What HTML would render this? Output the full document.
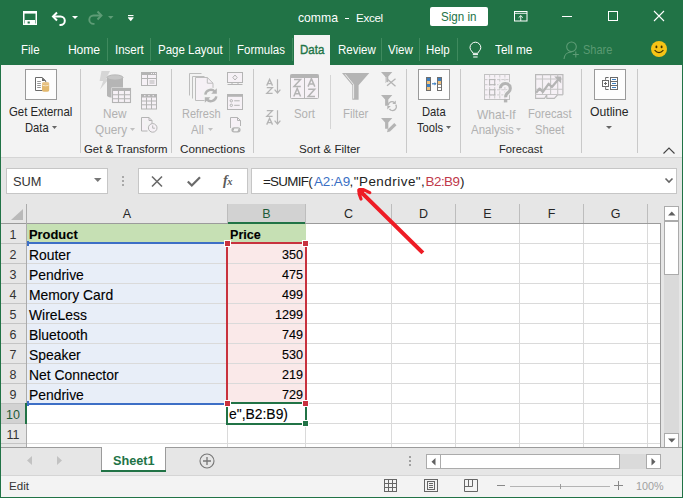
<!DOCTYPE html>
<html><head><meta charset="utf-8">
<style>
*{margin:0;padding:0;box-sizing:border-box}
html,body{width:683px;height:498px;overflow:hidden;background:#217346}
body{position:relative;font-family:"Liberation Sans",sans-serif}
.a{position:absolute}
.t{position:absolute;white-space:nowrap;line-height:1}
.sy{transform:scaleY(1.12);transform-origin:0 0}
svg{position:absolute;overflow:visible}
.ui{font-size:11.5px;color:#fff}
.rb{font-size:11.5px;color:#262626}
.dis{color:#b1b1b1}
.vs{position:absolute;width:1px;background:#c9c9c9}
.cell{font-size:13.9px;color:#000;-webkit-text-stroke:0.12px #000}
.hd{font-size:12.5px;color:#333}
.rn{font-size:12.5px;color:#333;width:26px;text-align:center;left:0}
</style></head><body>

<!-- ============ TITLE BAR ============ -->
<div class="a" style="left:0;top:0;width:683px;height:64px;background:#217346"></div>
<!-- save -->
<svg style="left:22px;top:10px" width="16" height="16" viewBox="0 0 16 16">
 <rect x="1.75" y="1.75" width="12.5" height="12.5" fill="none" stroke="#fff" stroke-width="1.5"/>
 <rect x="1" y="1" width="14" height="2.6" fill="#fff"/>
 <path d="M3 10h10v4.5H3z M5.6 11.6v2.4h2.2v-2.4z" fill="#fff" fill-rule="evenodd"/>
</svg>
<!-- undo -->
<svg style="left:51px;top:11px" width="16" height="14" viewBox="0 0 16 14">
 <path d="M6 1.5L2 5.5l4 4" fill="none" stroke="#fff" stroke-width="2"/>
 <path d="M2.5 5.5h7a4.3 4.3 0 0 1 0 8.6h-1" fill="none" stroke="#fff" stroke-width="2"/>
</svg>
<svg style="left:72px;top:16px" width="6" height="4" viewBox="0 0 6 4"><path d="M0 0h6l-3 3z" fill="#fff"/></svg>
<!-- redo -->
<svg style="left:87px;top:10px" width="16" height="15" viewBox="0 0 16 15">
 <path d="M10.5 1.5l4 4-4 4" fill="none" stroke="#5e9c76" stroke-width="1.9"/>
 <path d="M14 5.5H6.5a4.2 4.2 0 0 0 0 8.4h1" fill="none" stroke="#5e9c76" stroke-width="1.9"/>
</svg>
<svg style="left:108px;top:16px" width="6" height="4" viewBox="0 0 6 4"><path d="M0 0h5.5l-2.75 3z" fill="#5e9c76"/></svg>
<!-- qat customize -->
<svg style="left:128px;top:15px" width="6" height="7" viewBox="0 0 6 7">
 <rect x="0" y="0" width="5.5" height="1.1" fill="#fff"/>
 <path d="M0 2.2h5.5v0.9L2.75 6.2 0 3.1z" fill="#fff"/>
</svg>
<div class="t ui" style="left:298px;top:12px;font-size:12.2px">comma</div>
<div class="a" style="left:345px;top:18px;width:4px;height:1px;background:#fff"></div>
<div class="t ui" style="left:356px;top:12px;font-size:11.6px;letter-spacing:-0.3px">Excel</div>
<!-- sign in -->
<div class="a" style="left:430px;top:7px;width:58px;height:19px;background:#fff;border-radius:2px"></div>
<div class="t sy" style="left:441px;top:10px;font-size:11.6px;color:#217346">Sign in</div>
<!-- ribbon display options -->
<svg style="left:514px;top:11px" width="14" height="11" viewBox="0 0 14 11">
 <rect x="0.5" y="0.5" width="12.5" height="9.5" fill="none" stroke="#fff"/>
 <path d="M0.5 2.3h12.5" stroke="#fff" stroke-width="0.9"/>
 <path d="M6.75 10V4.6M4.6 6.7l2.15-2.1 2.15 2.1" fill="none" stroke="#fff" stroke-width="0.9"/>
</svg>
<!-- min/max/close -->
<div class="a" style="left:562px;top:16px;width:10px;height:1px;background:#fff"></div>
<div class="a" style="left:608px;top:11px;width:10px;height:10px;border:1px solid #fff"></div>
<svg style="left:654px;top:11px" width="10" height="10" viewBox="0 0 10 10"><path d="M0 0L10 10M10 0L0 10" stroke="#fff" stroke-width="1.1"/></svg>

<!-- ============ TABS ============ -->
<div class="t sy ui" style="left:21px;top:44px">File</div>
<div class="t sy ui" style="left:68px;top:43px;font-size:12.2px;letter-spacing:-0.2px">Home</div>
<div class="a" style="left:107px;top:38px;width:1px;height:23px;background:#3f8a5e"></div>
<div class="t sy ui" style="left:115px;top:44px">Insert</div>
<div class="a" style="left:150px;top:38px;width:1px;height:23px;background:#3f8a5e"></div>
<div class="t sy ui" style="left:158px;top:44px">Page Layout</div>
<div class="a" style="left:229px;top:38px;width:1px;height:23px;background:#3f8a5e"></div>
<div class="t sy ui" style="left:237px;top:44px">Formulas</div>
<div class="a" style="left:292px;top:38px;width:1px;height:23px;background:#3f8a5e"></div>
<div class="a" style="left:294px;top:35px;width:36px;height:30px;background:#f3f3f3"></div>
<div class="t sy ui" style="left:300px;top:44px;color:#217346;-webkit-text-stroke:0.35px #217346">Data</div>
<div class="t sy ui" style="left:338px;top:44px">Review</div>
<div class="a" style="left:381px;top:38px;width:1px;height:23px;background:#3f8a5e"></div>
<div class="t sy ui" style="left:388px;top:44px">View</div>
<div class="a" style="left:419px;top:38px;width:1px;height:23px;background:#3f8a5e"></div>
<div class="t sy ui" style="left:426px;top:44px">Help</div>
<div class="a" style="left:457px;top:38px;width:1px;height:23px;background:#3f8a5e"></div>
<!-- lightbulb -->
<svg style="left:469px;top:42px" width="13" height="16" viewBox="0 0 13 16">
 <path d="M4 11.3C3.6 9.6 1 8.2 1 5.6A5.4 5.4 0 0 1 11.8 5.6C11.8 8.2 9.2 9.6 8.8 11.3Z" fill="none" stroke="#fff" stroke-width="1"/>
 <path d="M3.8 12.6h5.2M4.2 15h4.4" stroke="#fff" stroke-width="1"/>
</svg>
<div class="t sy ui" style="left:495px;top:44px;font-size:11.8px">Tell me</div>
<!-- share -->
<svg style="left:563px;top:41px" width="19" height="19" viewBox="0 0 19 19">
 <circle cx="8.5" cy="5.8" r="4.8" fill="none" stroke="#5e9c76" stroke-width="1.1"/>
 <path d="M1 18C1.3 13.5 4.5 11 8.5 11" fill="none" stroke="#5e9c76" stroke-width="1.1"/>
 <path d="M12.8 10.5v6M9.8 13.5h6" stroke="#5e9c76" stroke-width="1.1"/>
</svg>
<div class="t sy ui" style="left:583px;top:44px;color:#5a9a72;font-size:11px">Share</div>
<!-- smiley -->
<svg style="left:651px;top:41px" width="16" height="16" viewBox="0 0 16 16">
 <circle cx="8" cy="8" r="8" fill="#f6c416"/>
 <ellipse cx="5.4" cy="5.9" rx="0.95" ry="1.4" fill="#3c3000"/><ellipse cx="10.6" cy="5.9" rx="0.95" ry="1.4" fill="#3c3000"/>
 <path d="M3.6 9.2Q8 14 12.4 9.2" fill="none" stroke="#3c3000" stroke-width="1.1"/>
</svg>

<!-- ============ RIBBON ============ -->
<div class="a" style="left:1px;top:65px;width:681px;height:93px;background:#f3f3f3;border-bottom:1px solid #d5d5d5"></div>


<!-- group 1: Get External Data -->
<div class="a" style="left:25px;top:69px;width:32px;height:31px;background:#fdfdfd;border:1px solid #9a9a9a"></div>
<svg style="left:34px;top:76px" width="17" height="17" viewBox="0 0 17 17">
 <path d="M1.5 1.5h6.8l3.4 3.4V14.5H1.5z" fill="#fff" stroke="#6a6a6a"/>
 <path d="M8 1.5v3.6h3.7z" fill="#6a6a6a"/>
 <path d="M3.2 5.5h3.6M3.2 7.5h3.6M3.2 9.5h3.6M3.2 11.5h3.6" stroke="#8a8a8a" stroke-width="0.9"/>
 <path d="M8 7.5v6.7a3.6 1.5 0 0 0 7.2 0V7.5z" fill="#e2b86e"/>
 <ellipse cx="11.6" cy="7.3" rx="3.6" ry="1.4" fill="#e8c488"/>
 <path d="M8 8.4a3.6 1.4 0 0 0 7.2 0" fill="none" stroke="#fff" stroke-width="0.6"/>
</svg>
<div class="t sy rb" style="left:9px;top:106px;font-size:11.4px">Get External</div>
<div class="t sy rb" style="left:25px;top:122px;font-size:11.2px">Data</div>
<svg style="left:52px;top:126px" width="6" height="4" viewBox="0 0 6 4"><path d="M0 0h5l-2.5 3z" fill="#666"/></svg>
<div class="vs" style="left:80px;top:69px;height:84px"></div>

<!-- group 2: Get & Transform -->
<svg style="left:98px;top:70px" width="36" height="34" viewBox="0 0 36 34">
 <path d="M3.5 1H12L8.2 8.6H11.2L2 19.6L5.2 11H1.6Z" fill="#d6d6d6"/>
 <path d="M9 7.5V25.5A8 2.6 0 0 0 25 25.5V7.5Z" fill="#b5b5b5"/>
 <ellipse cx="17" cy="7.5" rx="8" ry="2.6" fill="#c6c6c6" stroke="#b5b5b5"/>
 <rect x="13.5" y="17.5" width="20" height="16" fill="#f3f3f3"/>
 <rect x="14.5" y="18.5" width="18" height="14" fill="#f6f1f6" stroke="#b4b4b4" stroke-width="1.1"/>
 <rect x="14" y="18" width="19" height="3" fill="#b4b4b4"/>
 <path d="M20.5 21v11.5M26.5 21v11.5M14.5 24.8h18M14.5 28.7h18" stroke="#b4b4b4" stroke-width="1.1"/>
</svg>
<div class="t sy rb dis" style="left:103px;top:108px;font-size:11.8px">New</div>
<div class="t sy rb dis" style="left:95px;top:124px;font-size:11.8px">Query</div>
<svg style="left:130px;top:128px" width="6" height="4" viewBox="0 0 6 4"><path d="M0 0h5l-2.5 3z" fill="#c0c0c0"/></svg>
<svg style="left:141px;top:72px" width="16" height="14" viewBox="0 0 16 14">
 <rect x="0.5" y="0.5" width="15" height="13" fill="#f6f1f6" stroke="#b4b4b4"/>
 <rect x="0" y="0" width="16" height="3" fill="#b4b4b4"/>
 <path d="M10 1.5h1M12 1.5h1M14 1.5h1" stroke="#f6f1f6"/>
 <path d="M6.5 3v10.5M0.5 6.5h15M8.5 9h5M8.5 11h5" stroke="#b4b4b4"/>
</svg>
<svg style="left:141px;top:94px" width="16" height="16" viewBox="0 0 16 16">
 <rect x="0.5" y="0.5" width="15" height="14.5" fill="#f6f1f6" stroke="#b4b4b4"/>
 <rect x="0" y="0" width="16" height="3.5" fill="#b4b4b4"/>
 <path d="M3 1.7h1.5M7.2 1.7h1.5M11.5 1.7h1.5" stroke="#f6f1f6"/>
 <path d="M5.5 3.5v11.5M10.5 3.5v11.5M0.5 7h15M0.5 10.8h15" stroke="#b4b4b4"/>
</svg>
<svg style="left:141px;top:117px" width="17" height="16" viewBox="0 0 17 16">
 <path d="M0.5 0.5h7.5l3 3v3.5M0.5 0.5v13.5h6" fill="#f6f1f6" stroke="#b4b4b4"/>
 <path d="M8 0.5v3h3" fill="none" stroke="#b4b4b4"/>
 <circle cx="11.7" cy="10.9" r="4.3" fill="#f6f1f6" stroke="#b4b4b4"/>
 <path d="M11.7 8.4v2.8h2.2" fill="none" stroke="#b4b4b4"/>
</svg>
<div class="t rb" style="left:84px;top:144px;font-size:11.4px">Get &amp; Transform</div>
<div class="vs" style="left:171px;top:69px;height:84px"></div>

<!-- group 3: Connections -->
<svg style="left:188px;top:72px" width="32" height="32" viewBox="0 0 32 32">
 <path d="M1.5 23.5V1.5H13.5" fill="none" stroke="#bdbdbd"/>
 <path d="M4.5 26.5V4.5H16.5" fill="none" stroke="#bdbdbd"/>
 <path d="M7.5 5.5H19.3L25 11.2V28.5H7.5Z" fill="#f6f1f6" stroke="#bdbdbd"/>
 <path d="M19.3 5.5V11.2H25" fill="none" stroke="#bdbdbd"/>
 <circle cx="22.8" cy="23.5" r="8" fill="#f3f3f3"/>
 <path d="M17.3 22.6A5.5 5.5 0 0 1 26.8 19.6" fill="none" stroke="#b4b4b4" stroke-width="2.4"/>
 <path d="M28.8 16.2V21.8H23.2Z" fill="#b4b4b4"/>
 <path d="M28.3 24.4A5.5 5.5 0 0 1 18.8 27.4" fill="none" stroke="#b4b4b4" stroke-width="2.4"/>
 <path d="M16.8 30.8V25.2H22.4Z" fill="#b4b4b4"/>
</svg>
<div class="t sy rb dis" style="left:182px;top:108px;font-size:11px">Refresh</div>
<div class="t sy rb dis" style="left:191px;top:124px;font-size:11.5px">All</div>
<svg style="left:208px;top:128px" width="6" height="4" viewBox="0 0 6 4"><path d="M0 0h5l-2.5 3z" fill="#c0c0c0"/></svg>
<svg style="left:227px;top:72px" width="16" height="14" viewBox="0 0 16 14">
 <rect x="0.5" y="0.5" width="15" height="10" fill="#f6f1f6" stroke="#b4b4b4"/>
 <path d="M0.5 12.5h15M5 10.5v2M11 10.5v2" stroke="#b4b4b4"/>
 <path d="M8 3l2.2 2.5L8 8 5.8 5.5z" fill="none" stroke="#b4b4b4"/>
</svg>
<svg style="left:227px;top:94px" width="16" height="16" viewBox="0 0 16 16">
 <rect x="0.5" y="0.5" width="15" height="15" fill="#f6f1f6" stroke="#b4b4b4"/>
 <rect x="0" y="0" width="16" height="2.8" fill="#b4b4b4"/>
 <circle cx="4.3" cy="6.8" r="1.2" fill="none" stroke="#b4b4b4"/><circle cx="4.3" cy="11.3" r="1.2" fill="none" stroke="#b4b4b4"/>
 <path d="M7.2 6.8h5.5M7.2 11.3h5.5" stroke="#b4b4b4"/>
</svg>
<svg style="left:229px;top:117px" width="14" height="16" viewBox="0 0 14 16">
 <path d="M1.5 11V0.5h7l3 3V9" fill="#f6f1f6" stroke="#b4b4b4"/>
 <path d="M8.5 0.5v3h3" fill="none" stroke="#b4b4b4"/>
 <path d="M6.5 10.8H5A2 2 0 0 0 5 14.8h3.5A2 2 0 0 0 9.5 12.2M7.5 14.8H9A2 2 0 0 0 9 10.8H5.5A2 2 0 0 0 4.5 13.4" fill="none" stroke="#b4b4b4" stroke-width="1.2"/>
</svg>
<div class="t rb" style="left:180px;top:143px;font-size:11.7px">Connections</div>
<div class="vs" style="left:253px;top:69px;height:84px"></div>

<!-- group 4: Sort & Filter -->
<svg style="left:266px;top:79px" width="16" height="16" viewBox="0 0 16 16">
 <path d="M0.7 6.6L3.6 0.4L6.5 6.6M1.6 4.6h4" fill="none" stroke="#b4b4b4" stroke-width="1.3"/>
 <path d="M0.8 8.6h5.6L0.8 14.4h5.8" fill="none" stroke="#b4b4b4" stroke-width="1.3"/>
 <path d="M11.5 0.2v13.6M8.6 10.6l2.9 3.4 2.9-3.4" fill="none" stroke="#b4b4b4" stroke-width="1.2"/>
</svg>
<svg style="left:266px;top:110px" width="16" height="16" viewBox="0 0 16 16">
 <path d="M0.8 0.6h5.6L0.8 6.4h5.8" fill="none" stroke="#b4b4b4" stroke-width="1.3"/>
 <path d="M0.7 14.6L3.6 8.4L6.5 14.6M1.6 12.6h4" fill="none" stroke="#b4b4b4" stroke-width="1.3"/>
 <path d="M11.5 0.2v13.6M8.6 10.6l2.9 3.4 2.9-3.4" fill="none" stroke="#b4b4b4" stroke-width="1.2"/>
</svg>
<svg style="left:290px;top:74px" width="29" height="25" viewBox="0 0 29 25">
 <rect x="0.5" y="0.5" width="28" height="24" rx="1" fill="#f6f1f6" stroke="#b4b4b4"/>
 <rect x="0.5" y="0.5" width="28" height="3.5" fill="#b4b4b4"/>
 <path d="M14.5 3v22" stroke="#b4b4b4"/>
 <path d="M4 5.5h6.5L4 12.6h6.8" fill="none" stroke="#b4b4b4" stroke-width="1.5"/>
 <path d="M3.8 22.5L7.2 14.5L10.6 22.5M5 19.8h4.5" fill="none" stroke="#b4b4b4" stroke-width="1.5"/>
 <path d="M18 12.6L21.4 4.6L24.8 12.6M19.2 9.9h4.5" fill="none" stroke="#b4b4b4" stroke-width="1.5"/>
 <path d="M18.2 15.3h6.5L18.2 22.4h6.8" fill="none" stroke="#b4b4b4" stroke-width="1.5"/>
</svg>
<div class="t sy rb dis" style="left:294px;top:108px;font-size:11.4px">Sort</div>
<div class="vs" style="left:330px;top:75px;height:54px;background:#d5d5d5"></div>
<svg style="left:342px;top:73px" width="28" height="27" viewBox="0 0 28 27">
 <path d="M0 0H27.3L16.6 12.2V26.7H10.3V12.2Z" fill="#b4b4b4"/>
 <path d="M3.2 1.3L11.6 11.6V25.6" fill="none" stroke="#f3f3f3" stroke-width="0.9"/>
</svg>
<div class="t sy rb dis" style="left:343px;top:108px;font-size:11.4px">Filter</div>
<svg style="left:381px;top:72px" width="16" height="15" viewBox="0 0 16 15">
 <path d="M0 0h11.3l-4 4.6v6.2h-3.2v-6.2z" fill="#b4b4b4"/>
 <path d="M4.8 5v5.5h3" fill="none" stroke="#f3f3f3" stroke-width="0.8"/>
 <path d="M6 13.8l8.5-7M6.5 7.3l8 7" stroke="#b4b4b4" stroke-width="1.3"/>
</svg>
<svg style="left:381px;top:95px" width="16" height="16" viewBox="0 0 16 16">
 <path d="M0 0h11.3l-4 4.6v6.2h-3.2v-6.2z" fill="#b4b4b4"/>
 <path d="M7.3 10.2a3.6 3.6 0 0 1 6.2-2.4M14.7 9.6a3.6 3.6 0 0 1-6.2 4.2" fill="none" stroke="#b4b4b4" stroke-width="1.4"/>
 <path d="M14.8 5.5v3.5h-3.5z M6.3 14.5v-3.5h3.5z" fill="#b4b4b4"/>
</svg>
<svg style="left:381px;top:118px" width="16" height="15" viewBox="0 0 16 15">
 <path d="M0 0h11.3l-4 4.6v6.2h-3.2v-6.2z" fill="#b4b4b4"/>
 <path d="M6 14.3l0.8-3 6.5-6.3 2.2 2.2-6.5 6.3z" fill="#b4b4b4"/>
</svg>
<div class="t rb" style="left:299px;top:143px;font-size:11.6px">Sort &amp; Filter</div>
<div class="vs" style="left:406px;top:69px;height:84px"></div>

<!-- group 5: Data Tools -->
<div class="a" style="left:418px;top:69px;width:32px;height:31px;background:#fdfdfd;border:1px solid #9a9a9a"></div>
<svg style="left:426px;top:77px" width="16" height="14" viewBox="0 0 16 14">
 <rect x="0.5" y="0.5" width="4" height="13" fill="#fff" stroke="#6e6e6e"/>
 <rect x="1" y="1" width="3" height="3" fill="#3d7fc1"/>
 <rect x="1" y="4" width="3" height="3" fill="#efc07a"/>
 <rect x="1" y="7" width="3" height="3" fill="#3d7fc1"/>
 <rect x="1" y="10" width="3" height="3" fill="#efc07a"/>
 <rect x="11.5" y="0.5" width="4" height="13" fill="#fff" stroke="#6e6e6e"/>
 <rect x="12" y="1" width="3" height="3" fill="#3d7fc1"/>
 <rect x="12" y="4" width="3" height="3" fill="#efc07a"/>
 <path d="M11.5 7.5h4M11.5 10.5h4" stroke="#6e6e6e" stroke-width="0.8"/>
 <path d="M6 6.8h3.5" stroke="#3d7fc1" stroke-width="1.2"/>
 <path d="M8.5 5l2 1.8-2 1.8z" fill="#3d7fc1"/>
</svg>
<div class="t sy rb" style="left:422px;top:106px;font-size:11.2px">Data</div>
<div class="t sy rb" style="left:417px;top:122px;font-size:11.2px">Tools</div>
<svg style="left:446px;top:126px" width="6" height="4" viewBox="0 0 6 4"><path d="M0 0h5l-2.5 3z" fill="#666"/></svg>
<div class="vs" style="left:460px;top:69px;height:84px"></div>

<!-- group 6: Forecast -->
<svg style="left:484px;top:74px" width="30" height="30" viewBox="0 0 30 30">
 <rect x="0.5" y="0.5" width="25" height="25" fill="#f6f1f6" stroke="#c2c2c2"/>
 <path d="M5.6 0.5v25M10.7 0.5v25M15.8 0.5v25M20.9 0.5v25M0.5 5.6h25M0.5 10.7h25M0.5 15.8h25M0.5 20.9h25" stroke="#cbcbcb" stroke-dasharray="3 1.2"/>
 <rect x="5.6" y="5.6" width="5.1" height="5.1" fill="#f6f1f6" stroke="#b4b4b4"/>
 <rect x="5.6" y="15.8" width="5.1" height="5.1" fill="#f6f1f6" stroke="#b4b4b4"/>
</svg>
<svg style="left:484px;top:74px" width="30" height="30" viewBox="0 0 30 30">
 <path d="M16.3 14.2A5 5 0 1 1 24.6 18.2C22.6 19.6 21.6 20.2 21.6 23.2" fill="none" stroke="#f3f3f3" stroke-width="5.4"/>
 <path d="M16.3 14.2A5 5 0 1 1 24.6 18.2C22.6 19.6 21.6 20.2 21.6 23.2" fill="none" stroke="#b4b4b4" stroke-width="3"/>
 <rect x="19.9" y="25.2" width="3.4" height="3.2" fill="#b4b4b4"/>
</svg>
<div class="t sy rb dis" style="left:477px;top:108px;font-size:12px">What-If</div>
<div class="t sy rb dis" style="left:471px;top:124px;font-size:11.5px">Analysis</div>
<svg style="left:516px;top:128px" width="6" height="4" viewBox="0 0 6 4"><path d="M0 0h5l-2.5 3z" fill="#c0c0c0"/></svg>
<svg style="left:535px;top:74px" width="29" height="25" viewBox="0 0 29 25">
 <path d="M0.6 20.8V0.6h27.3v20.2" fill="#f6f1f6" stroke="#b9b9b9" stroke-width="1.2"/>
 <path d="M0.6 20.8h27.3" stroke="#b9b9b9" stroke-width="1.2"/>
 <path d="M0.6 21v3.4h9l2-3.4M11.8 21v3.4h7.5l3.2-3.4" fill="#f6f1f6" stroke="#b9b9b9" stroke-width="1.1"/>
 <path d="M7.5 0.6v20.2M15.6 0.6v20.2M22.7 0.6v20.2M0.6 5h27.3M0.6 15.3h27.3" stroke="#c4c4c4" stroke-width="1.1"/>
 <path d="M1.1 18.8L4.6 14.6L7.9 17.9L13.6 9.8L16.9 13L24.6 4" fill="none" stroke="#b4b4b4" stroke-width="2.3" stroke-linejoin="round"/>
 <path d="M19.2 2.6H26.2V9.6Z" fill="#b4b4b4"/>
</svg>
<div class="t sy rb dis" style="left:528px;top:108px;font-size:11.2px">Forecast</div>
<div class="t sy rb dis" style="left:535px;top:124px;font-size:11.2px">Sheet</div>
<div class="t rb" style="left:499px;top:144px;font-size:11.2px">Forecast</div>
<div class="vs" style="left:581px;top:69px;height:84px"></div>

<!-- group 7: Outline -->
<div class="a" style="left:594px;top:69px;width:32px;height:31px;background:#fdfdfd;border:1px solid #9a9a9a"></div>
<svg style="left:601px;top:76px" width="18" height="15" viewBox="0 0 18 15">
 <rect x="1.5" y="4.5" width="6" height="6" fill="#fff" stroke="#6a6a6a"/>
 <path d="M3 7.5h3M4.5 6v3" stroke="#6a6a6a"/>
 <path d="M4.6 3.8V1.5H7.6M4.6 11.2v2.3H7.6" fill="none" stroke="#6a6a6a"/>
 <rect x="9.5" y="1.5" width="7" height="12" fill="#fff" stroke="#6a6a6a"/>
 <path d="M9.5 5.5h7M9.5 9.5h7" stroke="#6a6a6a"/>
 <path d="M11 3.5h4M11 7.5h4M11 11.5h4" stroke="#3d7fc1" stroke-width="1.1"/>
</svg>
<div class="t sy rb" style="left:590px;top:105px;font-size:12.2px">Outline</div>
<svg style="left:606px;top:126px" width="6" height="4" viewBox="0 0 6 4"><path d="M0 0h6l-3 3z" fill="#666"/></svg>
<div class="vs" style="left:637px;top:69px;height:84px"></div>
<svg style="left:663px;top:147px" width="12" height="7" viewBox="0 0 12 7"><path d="M0.5 6.5L6 1l5.5 5.5" fill="none" stroke="#444" stroke-width="1.1"/></svg>


<!-- ============ FORMULA BAR ============ -->
<div class="a" style="left:1px;top:158px;width:681px;height:66px;background:#e6e6e6"></div>
<div class="a" style="left:6px;top:168px;width:102px;height:26px;background:#fff;border:1px solid #c6c6c6"></div>
<div class="t" style="left:13px;top:176px;font-size:12.8px;color:#333">SUM</div>
<svg style="left:94px;top:178px" width="8" height="5" viewBox="0 0 8 5"><path d="M0 0h7.5l-3.75 4z" fill="#777"/></svg>
<div class="a" style="left:122px;top:176px;width:2px;height:2px;background:#a8a8a8"></div>
<div class="a" style="left:122px;top:180px;width:2px;height:2px;background:#a8a8a8"></div>
<div class="a" style="left:122px;top:184px;width:2px;height:2px;background:#a8a8a8"></div>
<div class="a" style="left:138px;top:168px;width:110px;height:26px;background:#fff;border:1px solid #c6c6c6"></div>
<svg style="left:151px;top:176px" width="12" height="11" viewBox="0 0 12 11"><path d="M1 0.5l10 10M11 0.5l-10 10" stroke="#6a6a6a" stroke-width="1.6"/></svg>
<svg style="left:187px;top:176px" width="14" height="11" viewBox="0 0 14 11"><path d="M0.8 5.5l4 4L13 1.2" fill="none" stroke="#6a6a6a" stroke-width="2.2"/></svg>
<div class="t" style="left:223px;top:174px;font-family:'Liberation Serif',serif;font-style:italic;font-weight:bold;font-size:14px;color:#5a5a5a">f<span style="font-size:10.5px;margin-left:-0.5px">x</span></div>
<div class="a" style="left:251px;top:168px;width:426px;height:26px;background:#fff;border:1px solid #c6c6c6"></div>
<div class="t" style="left:263px;top:175px;font-size:13.4px;color:#222;letter-spacing:-0.7px">=SUMIF(</div>
<div class="t" style="left:314px;top:175px;font-size:13.4px;color:#3a6fc4;letter-spacing:-0.1px">A2:A9</div>
<div class="t" style="left:349.5px;top:175px;font-size:13.4px;color:#222;letter-spacing:0.5px">,"Pendrive",</div>
<div class="t" style="left:425.5px;top:175px;font-size:13.4px;color:#c0394a;letter-spacing:-0.5px">B2:B9</div>
<div class="t" style="left:460px;top:175px;font-size:13.4px;color:#222">)</div>
<svg style="left:665px;top:178px" width="8" height="5" viewBox="0 0 8 5"><path d="M0.5 0.5L4 4l3.5-3.5" fill="none" stroke="#666" stroke-width="1.6"/></svg>

<!-- ============ HEADERS ============ -->
<div class="a" style="left:1px;top:204px;width:660px;height:19px;background:#e6e6e6"></div>
<div class="a" style="left:1px;top:223px;width:660px;height:1px;background:#9b9b9b"></div>
<div class="a" style="left:228px;top:204px;width:77px;height:19px;background:#d2d2d2"></div>
<div class="a" style="left:228px;top:222px;width:77px;height:2px;background:#217346"></div>
<svg style="left:11px;top:209px" width="12" height="11" viewBox="0 0 12 11"><path d="M12 0v11H0z" fill="#b9b9b9"/></svg>
<div class="a" style="left:26px;top:204px;width:1px;height:243px;background:#ababab"></div>
<div class="a" style="left:227px;top:204px;width:1px;height:19px;background:#bdbdbd"></div>
<div class="t hd" style="left:27px;width:200px;text-align:center;top:208px;color:#262626">A</div>
<div class="a" style="left:305px;top:204px;width:1px;height:19px;background:#bdbdbd"></div>
<div class="t hd" style="left:228px;width:77px;text-align:center;top:208px;color:#1d5a37">B</div>
<div class="a" style="left:391px;top:204px;width:1px;height:19px;background:#bdbdbd"></div>
<div class="t hd" style="left:306px;width:85px;text-align:center;top:208px;color:#262626">C</div>
<div class="a" style="left:455px;top:204px;width:1px;height:19px;background:#bdbdbd"></div>
<div class="t hd" style="left:392px;width:63px;text-align:center;top:208px;color:#262626">D</div>
<div class="a" style="left:519px;top:204px;width:1px;height:19px;background:#bdbdbd"></div>
<div class="t hd" style="left:456px;width:63px;text-align:center;top:208px;color:#262626">E</div>
<div class="a" style="left:583px;top:204px;width:1px;height:19px;background:#bdbdbd"></div>
<div class="t hd" style="left:520px;width:63px;text-align:center;top:208px;color:#262626">F</div>
<div class="a" style="left:647px;top:204px;width:1px;height:19px;background:#bdbdbd"></div>
<div class="t hd" style="left:584px;width:63px;text-align:center;top:208px;color:#262626">G</div>
<!-- ============ GRID ============ -->
<div class="a" style="left:27px;top:224px;width:634px;height:223px;background:#fff"></div>
<div class="a" style="left:660px;top:223px;width:1px;height:224px;background:#9b9b9b"></div>
<div class="a" style="left:1px;top:224px;width:25px;height:223px;background:#e6e6e6"></div>
<div class="a" style="left:27px;top:244px;width:200px;height:159px;background:#e8eef8"></div>
<div class="a" style="left:228px;top:244px;width:77px;height:159px;background:#fae9e9"></div>
<div class="a" style="left:27px;top:243px;width:633px;height:1px;background:#dadada"></div>
<div class="a" style="left:1px;top:243px;width:25px;height:1px;background:#c4c4c4"></div>
<div class="a" style="left:27px;top:263px;width:633px;height:1px;background:#dadada"></div>
<div class="a" style="left:1px;top:263px;width:25px;height:1px;background:#c4c4c4"></div>
<div class="a" style="left:27px;top:283px;width:633px;height:1px;background:#dadada"></div>
<div class="a" style="left:1px;top:283px;width:25px;height:1px;background:#c4c4c4"></div>
<div class="a" style="left:27px;top:303px;width:633px;height:1px;background:#dadada"></div>
<div class="a" style="left:1px;top:303px;width:25px;height:1px;background:#c4c4c4"></div>
<div class="a" style="left:27px;top:323px;width:633px;height:1px;background:#dadada"></div>
<div class="a" style="left:1px;top:323px;width:25px;height:1px;background:#c4c4c4"></div>
<div class="a" style="left:27px;top:343px;width:633px;height:1px;background:#dadada"></div>
<div class="a" style="left:1px;top:343px;width:25px;height:1px;background:#c4c4c4"></div>
<div class="a" style="left:27px;top:363px;width:633px;height:1px;background:#dadada"></div>
<div class="a" style="left:1px;top:363px;width:25px;height:1px;background:#c4c4c4"></div>
<div class="a" style="left:27px;top:383px;width:633px;height:1px;background:#dadada"></div>
<div class="a" style="left:1px;top:383px;width:25px;height:1px;background:#c4c4c4"></div>
<div class="a" style="left:27px;top:403px;width:633px;height:1px;background:#dadada"></div>
<div class="a" style="left:1px;top:403px;width:25px;height:1px;background:#c4c4c4"></div>
<div class="a" style="left:27px;top:423px;width:633px;height:1px;background:#dadada"></div>
<div class="a" style="left:1px;top:423px;width:25px;height:1px;background:#c4c4c4"></div>
<div class="a" style="left:27px;top:443px;width:633px;height:1px;background:#dadada"></div>
<div class="a" style="left:1px;top:443px;width:25px;height:1px;background:#c4c4c4"></div>
<div class="a" style="left:227px;top:224px;width:1px;height:223px;background:#dadada"></div>
<div class="a" style="left:305px;top:224px;width:1px;height:223px;background:#dadada"></div>
<div class="a" style="left:391px;top:224px;width:1px;height:223px;background:#dadada"></div>
<div class="a" style="left:455px;top:224px;width:1px;height:223px;background:#dadada"></div>
<div class="a" style="left:519px;top:224px;width:1px;height:223px;background:#dadada"></div>
<div class="a" style="left:583px;top:224px;width:1px;height:223px;background:#dadada"></div>
<div class="a" style="left:647px;top:224px;width:1px;height:223px;background:#dadada"></div>
<div class="a" style="left:27px;top:224px;width:279px;height:19px;background:#c6e0b4"></div>
<div class="a" style="left:1px;top:404px;width:24px;height:19px;background:#d2d2d2"></div>
<div class="a" style="left:25px;top:403px;width:2px;height:21px;background:#217346"></div>
<div class="t rn" style="top:229px;color:#333">1</div>
<div class="t rn" style="top:249px;color:#333">2</div>
<div class="t rn" style="top:269px;color:#333">3</div>
<div class="t rn" style="top:289px;color:#333">4</div>
<div class="t rn" style="top:309px;color:#333">5</div>
<div class="t rn" style="top:329px;color:#333">6</div>
<div class="t rn" style="top:349px;color:#333">7</div>
<div class="t rn" style="top:369px;color:#333">8</div>
<div class="t rn" style="top:389px;color:#333">9</div>
<div class="t rn" style="top:409px;color:#1d5a37">10</div>
<div class="t rn" style="top:429px;color:#333">11</div>
<div class="t cell" style="left:29px;top:229px;font-weight:bold;font-size:12.9px">Product</div>
<div class="t cell" style="left:230px;top:229px;font-weight:bold;font-size:12.6px">Price</div>
<div class="t cell" style="left:29px;top:249px">Router</div>
<div class="t cell" style="left:228px;width:75px;text-align:right;top:249px;font-size:12.6px">350</div>
<div class="t cell" style="left:29px;top:269px">Pendrive</div>
<div class="t cell" style="left:228px;width:75px;text-align:right;top:269px;font-size:12.6px">475</div>
<div class="t cell" style="left:29px;top:289px">Memory Card</div>
<div class="t cell" style="left:228px;width:75px;text-align:right;top:289px;font-size:12.6px">499</div>
<div class="t cell" style="left:29px;top:309px">WireLess</div>
<div class="t cell" style="left:228px;width:75px;text-align:right;top:309px;font-size:12.6px">1299</div>
<div class="t cell" style="left:29px;top:329px">Bluetooth</div>
<div class="t cell" style="left:228px;width:75px;text-align:right;top:329px;font-size:12.6px">749</div>
<div class="t cell" style="left:29px;top:349px">Speaker</div>
<div class="t cell" style="left:228px;width:75px;text-align:right;top:349px;font-size:12.6px">530</div>
<div class="t cell" style="left:29px;top:369px">Net Connector</div>
<div class="t cell" style="left:228px;width:75px;text-align:right;top:369px;font-size:12.6px">219</div>
<div class="t cell" style="left:29px;top:389px">Pendrive</div>
<div class="t cell" style="left:228px;width:75px;text-align:right;top:389px;font-size:12.6px">729</div>
<div class="a" style="left:27px;top:242px;width:199px;height:2px;background:#3d6fc6"></div>
<div class="a" style="left:27px;top:403px;width:199px;height:2px;background:#3d6fc6"></div>
<div class="a" style="left:27px;top:241px;width:2px;height:5px;background:#3d6fc6"></div>
<div class="a" style="left:27px;top:401px;width:2px;height:5px;background:#3d6fc6"></div>
<div class="a" style="left:226px;top:242px;width:81px;height:2px;background:#c8323e"></div>
<div class="a" style="left:226px;top:242px;width:2px;height:163px;background:#c8323e"></div>
<div class="a" style="left:305px;top:242px;width:2px;height:163px;background:#c8323e"></div>
<div class="a" style="left:226px;top:402px;width:81px;height:2px;background:#217346"></div>
<div class="a" style="left:226px;top:423px;width:81px;height:2px;background:#217346"></div>
<div class="a" style="left:226px;top:402px;width:2px;height:23px;background:#217346"></div>
<div class="a" style="left:305px;top:402px;width:2px;height:23px;background:#217346"></div>
<div class="t cell" style="left:229px;top:408px">e",B2:B9)</div>
<div class="a" style="left:224px;top:240px;width:7px;height:7px;background:#fff"></div>
<div class="a" style="left:225px;top:241px;width:5px;height:5px;background:#c8323e"></div>
<div class="a" style="left:302px;top:240px;width:7px;height:7px;background:#fff"></div>
<div class="a" style="left:303px;top:241px;width:5px;height:5px;background:#c8323e"></div>
<div class="a" style="left:224px;top:400px;width:7px;height:7px;background:#fff"></div>
<div class="a" style="left:225px;top:401px;width:5px;height:5px;background:#c8323e"></div>
<div class="a" style="left:302px;top:400px;width:7px;height:7px;background:#fff"></div>
<div class="a" style="left:303px;top:401px;width:5px;height:5px;background:#c8323e"></div>
<div class="a" style="left:302px;top:420px;width:7px;height:7px;background:#fff"></div>
<div class="a" style="left:303px;top:421px;width:5px;height:5px;background:#217346"></div>
<div class="a" style="left:305px;top:423px;width:2px;height:2px;background:#217346"></div>
<!-- ============ V SCROLL ============ -->
<div class="a" style="left:661px;top:204px;width:21px;height:244px;background:#e6e6e6"></div>
<div class="a" style="left:664px;top:206px;width:15px;height:241px;background:#dadada"></div>
<div class="a" style="left:664px;top:206px;width:15px;height:15px;background:#fff;border:1px solid #ababab"></div>
<svg style="left:668px;top:211px" width="8" height="5" viewBox="0 0 8 5"><path d="M0 4.5h7.5L3.75 0.5z" fill="#606060"/></svg>
<div class="a" style="left:664px;top:221px;width:15px;height:54px;background:#fff;border:1px solid #ababab"></div>
<div class="a" style="left:664px;top:433px;width:15px;height:15px;background:#fff;border:1px solid #ababab"></div>
<svg style="left:668px;top:438px" width="8" height="5" viewBox="0 0 8 5"><path d="M0 0.5h7.5L3.75 4.5z" fill="#606060"/></svg>
<!-- ============ SHEET TABS ============ -->
<div class="a" style="left:1px;top:447px;width:681px;height:28px;background:#e6e6e6;border-top:1px solid #9b9b9b"></div>
<svg style="left:27px;top:456px" width="5" height="9" viewBox="0 0 5 9"><path d="M5 0v9L0 4.5z" fill="#c2c2c2"/></svg>
<svg style="left:57px;top:456px" width="5" height="9" viewBox="0 0 5 9"><path d="M0 0v9l5-4.5z" fill="#c2c2c2"/></svg>
<div class="a" style="left:101px;top:447px;width:65px;height:25px;background:#fff;border-left:1px solid #9b9b9b;border-right:1px solid #9b9b9b"></div>
<div class="a" style="left:101px;top:470px;width:65px;height:2px;background:#217346"></div>
<div class="t" style="left:113px;top:455px;font-size:12.7px;font-weight:bold;color:#217346">Sheet1</div>
<svg style="left:199px;top:453px" width="16" height="16" viewBox="0 0 16 16"><circle cx="8" cy="8" r="7" fill="none" stroke="#777" stroke-width="1.1"/><path d="M8 4v8M4 8h8" stroke="#777" stroke-width="1.3"/></svg>
<div class="a" style="left:409px;top:456px;width:2px;height:2px;background:#a0a0a0"></div>
<div class="a" style="left:409px;top:460px;width:2px;height:2px;background:#a0a0a0"></div>
<div class="a" style="left:409px;top:464px;width:2px;height:2px;background:#a0a0a0"></div>
<div class="a" style="left:426px;top:454px;width:235px;height:15px;background:#dadada"></div>
<div class="a" style="left:426px;top:454px;width:15px;height:15px;background:#fff;border:1px solid #ababab"></div>
<svg style="left:431px;top:458px" width="5" height="8" viewBox="0 0 5 8"><path d="M4.5 0v7.5L0.5 3.75z" fill="#606060"/></svg>
<div class="a" style="left:440px;top:454px;width:180px;height:15px;background:#fff;border:1px solid #ababab"></div>
<div class="a" style="left:646px;top:454px;width:15px;height:15px;background:#fff;border:1px solid #ababab"></div>
<svg style="left:651px;top:458px" width="5" height="8" viewBox="0 0 5 8"><path d="M0.5 0v7.5L4.5 3.75z" fill="#606060"/></svg>
<!-- ============ STATUS BAR ============ -->
<div class="a" style="left:1px;top:475px;width:681px;height:22px;background:#f3f3f3;border-top:1px solid #d5d5d5"></div>
<div class="t" style="left:9px;top:480px;font-size:11.6px;color:#333">Edit</div>
<svg style="left:383px;top:478px" width="15" height="15" viewBox="0 0 15 15">
 <rect x="1.5" y="1.5" width="12" height="12" fill="none" stroke="#666"/>
 <path d="M5.5 1.5v12M9.5 1.5v12M1.5 5.5h12M1.5 9.5h12" stroke="#666"/>
</svg>
<svg style="left:423px;top:478px" width="16" height="15" viewBox="0 0 16 15">
 <rect x="1.5" y="1.5" width="13" height="12" fill="none" stroke="#666"/>
 <rect x="4.5" y="3.5" width="7" height="8" fill="none" stroke="#666"/>
 <path d="M6 5.5h4M6 7.5h4M6 9.5h4" stroke="#666"/>
</svg>
<svg style="left:463px;top:478px" width="16" height="15" viewBox="0 0 16 15">
 <path d="M1.5 1.5h13v12h-13zM1.5 8.5h8v-7M5.5 1.5v7" fill="none" stroke="#666"/>
</svg>
<div class="a" style="left:497px;top:485px;width:8px;height:1px;background:#888"></div>
<div class="a" style="left:510px;top:486px;width:100px;height:1px;background:#b4b4b4"></div>
<div class="a" style="left:560px;top:484px;width:1px;height:5px;background:#9a9a9a"></div>
<svg style="left:614px;top:481px" width="9" height="9" viewBox="0 0 9 9"><path d="M4.5 0v9M0 4.5h9" stroke="#888" stroke-width="1"/></svg>
<div class="t" style="left:636px;top:481px;font-size:10.8px;color:#a0a0a0">100%</div>
<!-- ============ ARROW ============ -->
<svg style="left:0;top:0" width="683" height="498" viewBox="0 0 683 498">
 <path d="M421.5 251.5L360 191" stroke="#ee1c25" stroke-width="4" stroke-linecap="square"/>
 <path d="M369.8 192.6L363.5 189.6L359.2 189.6L359.2 194L361 199" fill="none" stroke="#ee1c25" stroke-width="3.2" stroke-linecap="round" stroke-linejoin="round"/>
 <path d="M357.5 189L365 189L364 193L361 196L358 195Z" fill="#ee1c25"/>
</svg>

</body></html>
